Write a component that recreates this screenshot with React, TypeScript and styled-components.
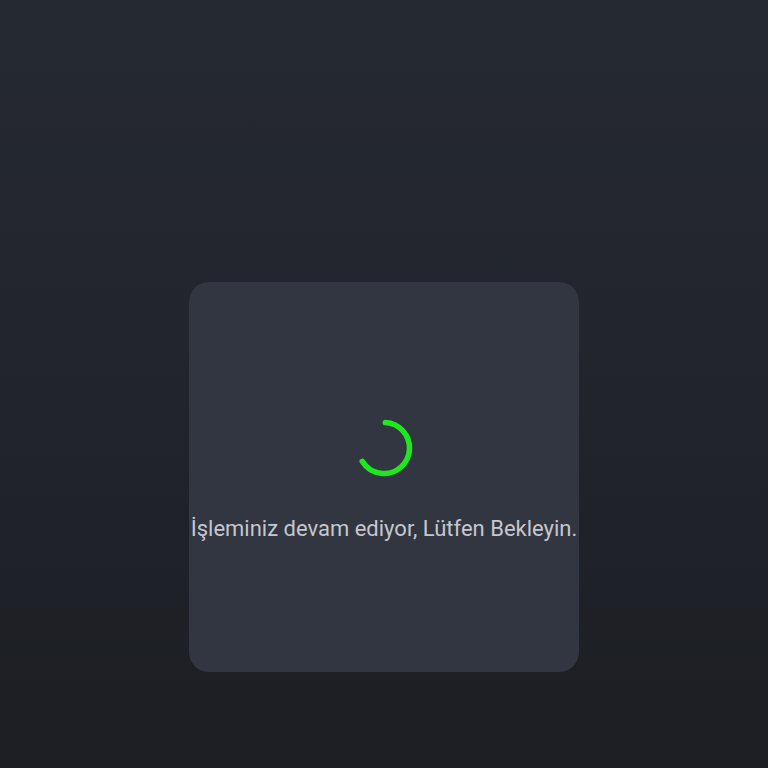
import React from "react";
import styled, { createGlobalStyle, keyframes } from "styled-components";

const GlobalStyle = createGlobalStyle`
  html, body {
    margin: 0;
    padding: 0;
    height: 100%;
  }
  body {
    font-family: Roboto, "Noto Sans", sans-serif;
  }
  #root {
    height: 100%;
  }
`;

const Page = styled.div`
  height: 768px;
  display: flex;
  align-items: center;
  justify-content: center;
  background: linear-gradient(180deg, #252932 0%, #22252d 45%, #1c1e23 100%);
`;

const Card = styled.div`
  width: 390px;
  height: 390px;
  margin-top: 186px;
  border-radius: 20px;
  background-color: #323640;
  display: flex;
  flex-direction: column;
  align-items: center;
  padding-top: 136px;
  box-sizing: border-box;
`;

const spin = keyframes`
  from { transform: rotate(0deg); }
  to { transform: rotate(360deg); }
`;

const Spinner = styled.svg`
  width: 60px;
  height: 60px;
  animation: ${spin} 1s linear infinite;
  animation-play-state: paused;
`;

const Message = styled.p`
  margin: 38px 0 0;
  font-size: 22px;
  color: #c4c7cf;
  white-space: nowrap;
`;

export default function App() {
  const r = 25.5;
  const c = 2 * Math.PI * r;
  const arc = (234 / 360) * c;
  return (
    <>
      <GlobalStyle />
      <Page>
        <Card>
          <Spinner viewBox="0 0 60 60">
            <circle
              cx="30"
              cy="30"
              r={r}
              fill="none"
              stroke="#1ee81e"
              strokeWidth="5.5"
              strokeLinecap="round"
              strokeDasharray={`${arc} ${c}`}
              transform="rotate(-87 30 30)"
            />
          </Spinner>
          <Message>İşleminiz devam ediyor, Lütfen Bekleyin.</Message>
        </Card>
      </Page>
    </>
  );
}
